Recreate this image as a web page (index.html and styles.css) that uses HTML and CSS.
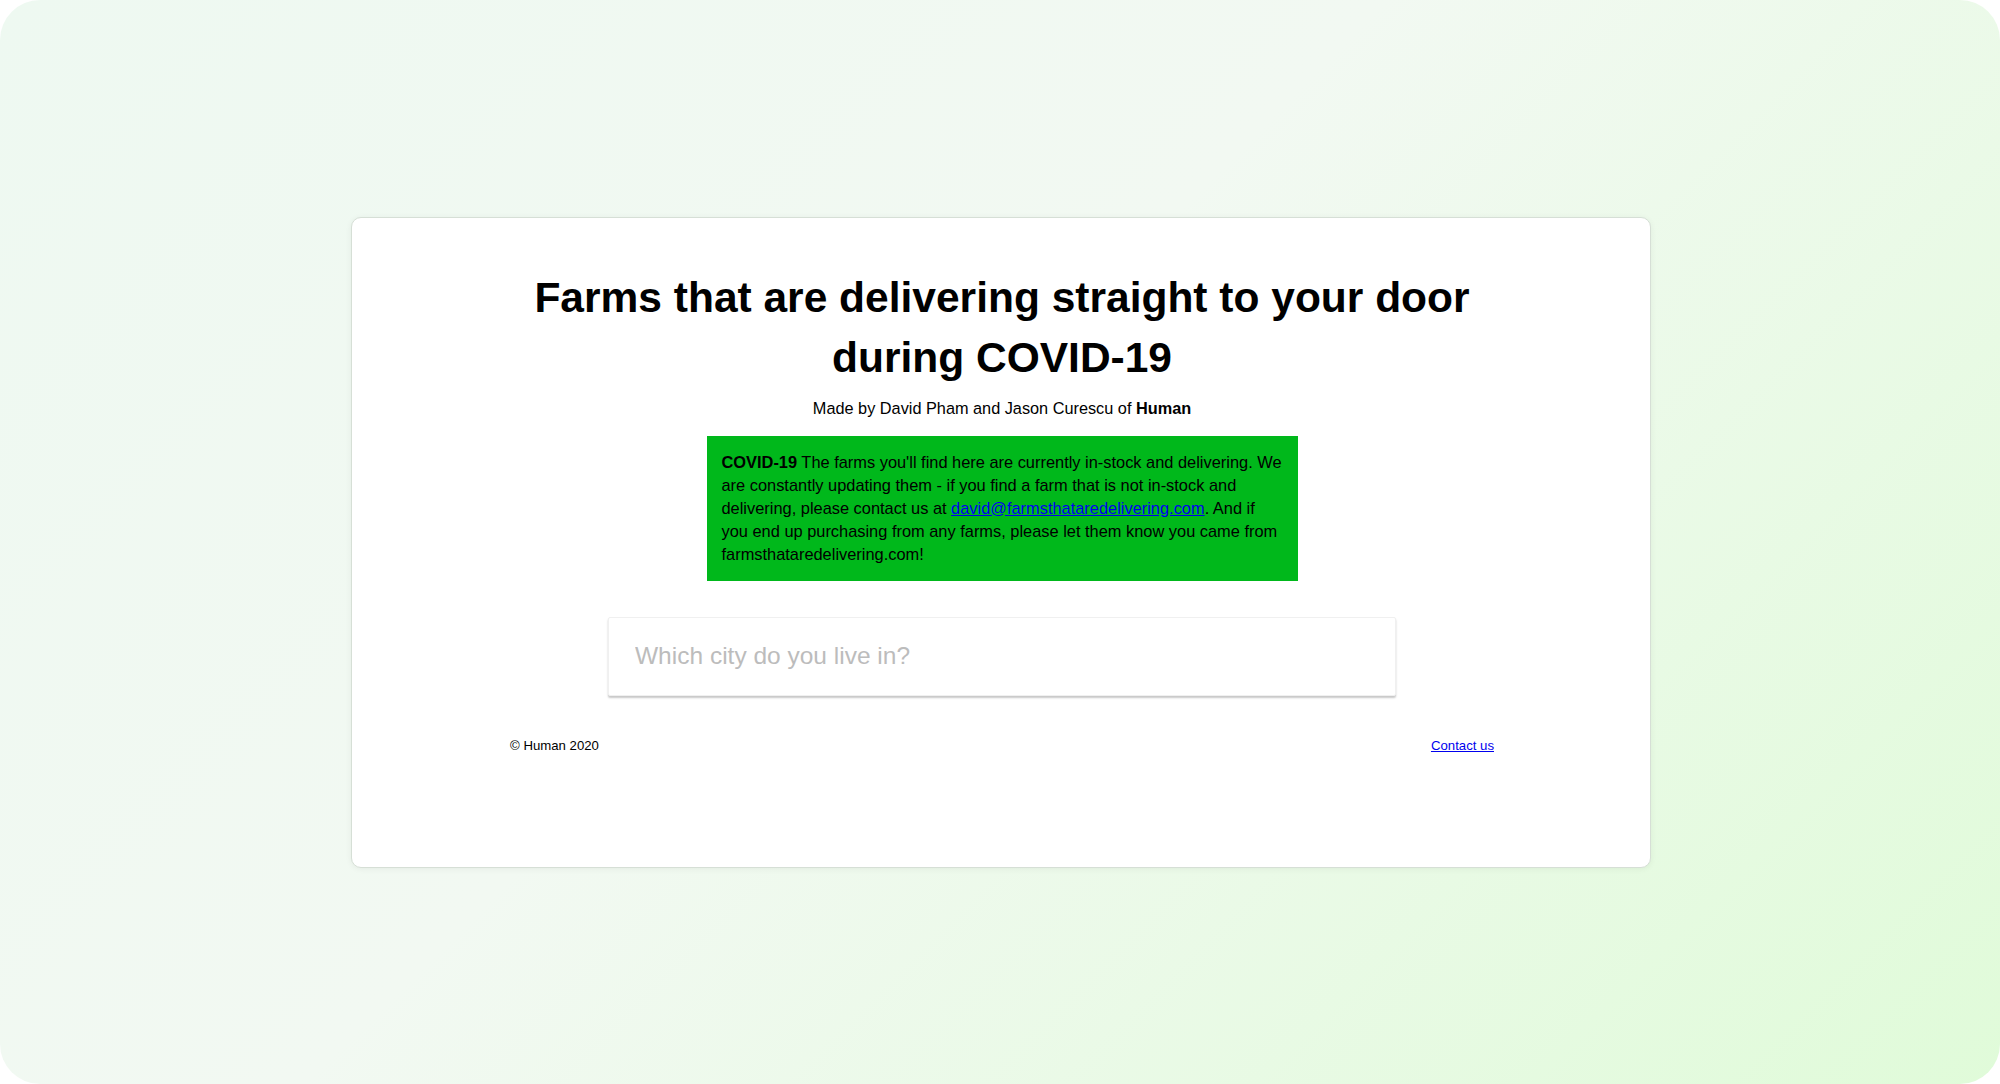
FILE: index.html
```html
<!DOCTYPE html>
<html lang="en">
<head>
<meta charset="utf-8">
<title>Farms that are delivering</title>
<link rel="stylesheet" href="styles.css">
</head>
<body>
<div class="backdrop">
  <main class="card">
    <h1 class="title">Farms that are delivering straight to your door during COVID-19</h1>
    <p class="byline">Made by David Pham and Jason Curescu of <strong>Human</strong></p>
    <div class="notice">
      <strong>COVID-19</strong> The farms you'll find here are currently in-stock and delivering. We are constantly updating them - if you find a farm that is not in-stock and delivering, please contact us at <a href="#">david@farmsthataredelivering.com</a>. And if you end up purchasing from any farms, please let them know you came from farmsthataredelivering.com!
    </div>
    <input class="search" type="text" placeholder="Which city do you live in?">
    <footer class="footer">
      <span class="copy">© Human 2020</span>
      <a class="contact" href="#">Contact us</a>
    </footer>
  </main>
</div>
</body>
</html>
```

FILE: styles.css
```css
html, body {
  margin: 0;
  padding: 0;
  background: #ffffff;
}

body {
  font-family: "Liberation Sans", Arial, Helvetica, sans-serif;
  color: #000;
}

.backdrop {
  box-sizing: border-box;
  width: 2000px;
  height: 1084px;
  padding-left: 2px;
  border-radius: 40px;
  background: linear-gradient(135deg, #eef9f1 0%, #f2f9f2 45%, #e0fbd9 100%);
  display: flex;
  align-items: center;
  justify-content: center;
  overflow: hidden;
}

.card {
  box-sizing: border-box;
  width: 1300px;
  height: 651px;
  background: #ffffff;
  border: 1px solid #d6dfd6;
  border-radius: 10px;
  box-shadow: 0 1px 6px rgba(0, 0, 0, 0.06);
  padding-top: 50px;
  padding-left: 2px;
  display: flex;
  flex-direction: column;
  align-items: center;
}

.title {
  margin: 0;
  max-width: 984px;
  text-align: center;
  font-size: 42.5px;
  line-height: 60px;
  font-weight: 700;
}

.byline {
  margin: 9px 0 0;
  font-size: 16.3px;
  line-height: 23px;
}

.notice {
  box-sizing: border-box;
  margin-top: 16px;
  width: 591px;
  padding: 15px;
  background: #00b81b;
  font-size: 16.4px;
  line-height: 23px;
  text-align: left;
}

.notice a {
  color: #0000ee;
}

.search {
  box-sizing: border-box;
  margin-top: 36px;
  width: 788px;
  height: 79px;
  padding: 0 26px;
  border: 1px solid #f0f0f0;
  border-radius: 2px;
  box-shadow: 0 2px 2px rgba(0, 0, 0, 0.22);
  font-family: "Liberation Sans", Arial, Helvetica, sans-serif;
  font-size: 24.5px;
  color: #333;
  outline: none;
  background: #fff;
}

.search::placeholder {
  color: #bcbcbc;
}

.footer {
  margin-top: 42px;
  width: 984px;
  display: flex;
  justify-content: space-between;
  font-size: 13.2px;
  line-height: 16px;
}

.contact {
  color: #0000ee;
}
```
